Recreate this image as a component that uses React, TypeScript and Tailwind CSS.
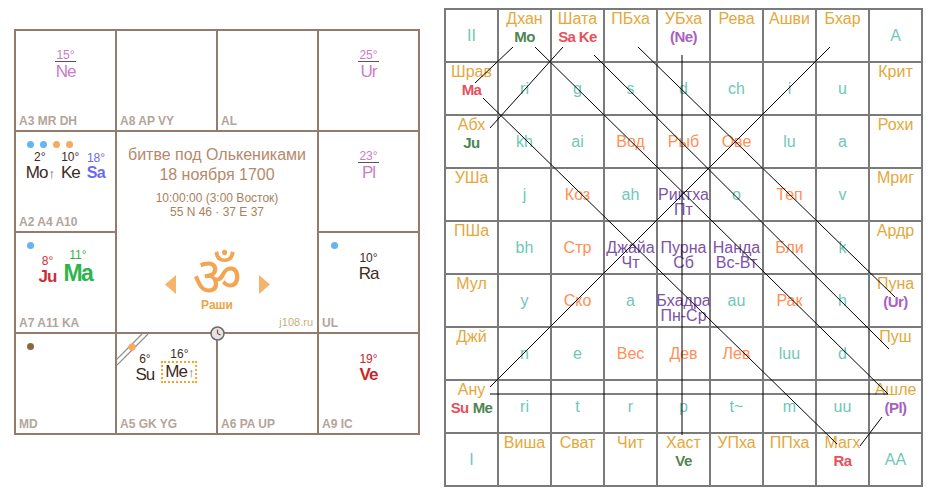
import React from "react"

const BR = "text-[#3d2b1f]"

function Dot({ c }: { c: string }) {
  return <span className={"block w-[7px] h-[7px] rounded-full " + c} />
}

function Cell({
  label,
  dots,
  children,
  extra,
}: {
  label?: string
  dots?: React.ReactNode
  children?: React.ReactNode
  extra?: React.ReactNode
}) {
  return (
    <div className="relative bg-white flex flex-col">
      {extra}
      <div className="h-[49px] flex flex-col">
        {dots ? <div className="flex gap-[6px] mt-[9px] ml-[11px]">{dots}</div> : null}
        <div className="mt-auto flex items-end justify-center gap-[7px]">{children}</div>
      </div>
      <div className="mt-auto px-[3px] pb-[2px] text-[12px] leading-[14px] font-bold text-[#b3a59b] whitespace-nowrap">
        {label}
      </div>
    </div>
  )
}

function Outer({ deg, name }: { deg: string; name: string }) {
  return (
    <div className="flex flex-col items-center text-[#c97dc8]">
      <span className="text-[12px] leading-[12px] px-[1px] border-b border-[#555]">{deg}°</span>
      <span className="text-[17px] leading-none tracking-[-1px] mt-[1px]">{name}</span>
    </div>
  )
}

function Planet({
  deg,
  name,
  degCls,
  nameCls,
}: {
  deg: string
  name: React.ReactNode
  degCls: string
  nameCls: string
}) {
  return (
    <div className="flex flex-col items-center">
      <span className={"text-[12px] leading-[13px] " + degCls}>{deg}°</span>
      <span className={"leading-none " + nameCls}>{name}</span>
    </div>
  )
}

function Clock() {
  return (
    <svg
      className="absolute left-[196px] top-[297px]"
      width="15"
      height="15"
      viewBox="-7.5 -7.5 15 15"
    >
      <circle r="6.5" fill="#e4e4e4" stroke="#6b6b6b" strokeWidth="1.5" />
      <line x1="0" y1="0" x2="0" y2="-4" stroke="#c0392b" strokeWidth="1.2" />
      <line x1="0" y1="0" x2="3" y2="1.5" stroke="#555" strokeWidth="1.2" />
    </svg>
  )
}

function LeftChart() {
  return (
    <div className="relative ml-[14px] mt-[29px] grid grid-cols-[repeat(4,99px)] grid-rows-[repeat(4,99px)] gap-[2px] p-[2px] bg-[#957b6b]">
      <Cell label="A3 MR DH">
        <Outer deg="15" name="Ne" />
      </Cell>
      <Cell label="A8 AP VY" />
      <Cell label="AL" />
      <Cell>
        <Outer deg="25" name="Ur" />
      </Cell>

      <Cell
        label="A2 A4 A10"
        dots={
          <>
            <Dot c="bg-[#66b5f2]" />
            <Dot c="bg-[#66b5f2]" />
            <Dot c="bg-[#f7a95c]" />
            <Dot c="bg-[#f7a95c]" />
          </>
        }
      >
        <Planet
          deg="2"
          degCls={BR}
          nameCls={"text-[17px] tracking-[-1px] " + BR}
          name={
            <>
              Mo<span className="text-[13px] text-[#555] ml-[1px]">↑</span>
            </>
          }
        />
        <Planet deg="10" degCls={BR} nameCls={"text-[17px] tracking-[-1px] " + BR} name="Ke" />
        <Planet
          deg="18"
          degCls="text-[#6b6bf0]"
          nameCls="text-[16px] font-bold tracking-[-0.5px] text-[#6b6bf0]"
          name="Sa"
        />
      </Cell>

      <div className="col-span-2 row-span-2 bg-white flex flex-col items-center pt-[13px] text-[#b5896a]">
        <div className="text-[16px] leading-[20px] whitespace-nowrap">битве под Ольке­никами</div>
        <div className="text-[16px] leading-[20px]">18 ноября 1700</div>
        <div className="mt-[6px] text-[12px] leading-[14px] text-[#a97f5d]">10:00:00 (3:00 Восток)</div>
        <div className="text-[12px] leading-[14px] text-[#a97f5d]">55 N 46 · 37 E 37</div>
        <div className="mt-auto w-full flex flex-col items-center">
          <div className="h-[46px] flex items-center">
            <svg className="mt-[18px]" width="11" height="19" viewBox="0 0 11 19">
              <polygon points="11,0 11,19 0,9.5" fill="#f5b36b" />
            </svg>
            <div className="w-[47px] mx-[18px] flex justify-center">
              <span className="block text-[54px] leading-[28px] text-[#f2a553] translate-y-[8px] font-['Noto_Sans_Devanagari','Lohit_Devanagari','FreeSans',sans-serif]">
                ॐ
              </span>
            </div>
            <svg className="mt-[18px]" width="11" height="19" viewBox="0 0 11 19">
              <polygon points="0,0 0,19 11,9.5" fill="#f5b36b" />
            </svg>
          </div>
          <div className="text-[12px] leading-[14px] font-bold text-[#eea447]">Раши</div>
          <div className="self-end mt-[4px] pr-[4px] pb-[3px] text-[11px] leading-[13px] text-[#c8b078]">j108.ru</div>
        </div>
      </div>

      <Cell>
        <Outer deg="23" name="Pl" />
      </Cell>

      <Cell label="A7 A11 KA" dots={<Dot c="bg-[#66b5f2]" />}>
        <Planet
          deg="8"
          degCls="text-[#cc2f3c]"
          nameCls="text-[17px] font-bold tracking-[-1px] text-[#cc2f3c]"
          name="Ju"
        />
        <Planet
          deg="11"
          degCls="text-[#2cb54c]"
          nameCls="text-[23px] font-bold tracking-[-1.5px] text-[#2cb54c]"
          name="Ma"
        />
      </Cell>
      <Cell label="UL" dots={<span className="ml-[1px]"><Dot c="bg-[#66b5f2]" /></span>}>
        <Planet deg="10" degCls={BR} nameCls={"text-[17px] tracking-[-1px] " + BR} name="Ra" />
      </Cell>

      <Cell label="MD" dots={<Dot c="bg-[#8b6640]" />} />
      <Cell
        label="A5 GK YG"
        extra={
          <svg className="absolute left-0 top-0" width="32" height="34" viewBox="0 0 32 34">
            <line x1="0" y1="25" x2="25" y2="0" stroke="#8d8d8d" strokeWidth="1.2" />
            <line x1="0" y1="31" x2="31" y2="0" stroke="#8d8d8d" strokeWidth="1.2" />
            <circle cx="15" cy="13" r="3.6" fill="#f7a95c" />
          </svg>
        }
      >
        <Planet deg="6" degCls={BR} nameCls={"text-[17px] tracking-[-1px] " + BR} name="Su" />
        <div className="flex flex-col items-center">
          <span className={"text-[12px] leading-[13px] " + BR}>16°</span>
          <span
            className={
              "text-[17px] leading-[17px] tracking-[-1px] border-2 border-dotted border-[#f5a623] px-[2px] " + BR
            }
          >
            Me<span className="text-[13px] text-[#777] ml-[1px]">↑</span>
          </span>
        </div>
      </Cell>
      <Cell label="A6 PA UP" />
      <Cell label="A9 IC">
        <Planet
          deg="19"
          degCls="text-[#c8252c]"
          nameCls="text-[17px] font-bold tracking-[-1px] text-[#c8252c]"
          name="Ve"
        />
      </Cell>

      <Clock />
    </div>
  )
}

const RED = "text-[#e8505b]"
const GRN = "text-[#4f8552]"
const PUR = "text-[#a861c0]"

type P = [string, string]
type C =
  | { t: "n"; name: string; pl?: P[] }
  | { t: "s"; v: string }
  | { t: "z"; v: string }
  | { t: "d"; a: string; b: string }
  | { t: "c"; v: string }

const n = (name: string, pl?: P[]): C => ({ t: "n", name, pl })
const s = (v: string): C => ({ t: "s", v })
const z = (v: string): C => ({ t: "z", v })
const d = (a: string, b: string): C => ({ t: "d", a, b })
const c = (v: string): C => ({ t: "c", v })

const rows: C[][] = [
  [c("II"), n("Дхан", [["Mo", GRN]]), n("Шата", [["Sa Ke", RED]]), n("ПБха"), n("УБха", [["(Ne)", PUR]]), n("Рева"), n("Ашви"), n("Бхар"), c("A")],
  [n("Шрав", [["Ma", RED]]), s("ri"), s("g"), s("s"), s("d"), s("ch"), s("i"), s("u"), n("Крит")],
  [n("Абх", [["Ju", GRN]]), s("kh"), s("ai"), z("Вод"), z("Рыб"), z("Ове"), s("lu"), s("a"), n("Рохи")],
  [n("УШа"), s("j"), z("Коз"), s("ah"), d("Риктха", "Пт"), s("o"), z("Теп"), s("v"), n("Мриг")],
  [n("ПШа"), s("bh"), z("Стр"), d("Джайа", "Чт"), d("Пурна", "Сб"), d("Нанда", "Вс-Вт"), z("Бли"), s("k"), n("Ардр")],
  [n("Мул"), s("y"), z("Ско"), s("a"), d("Бхадра", "Пн-Ср"), s("au"), z("Рак"), s("h"), n("Пуна", [["(Ur)", PUR]])],
  [n("Джй"), s("n"), s("e"), z("Вес"), z("Дев"), z("Лев"), s("luu"), s("d"), n("Пуш")],
  [n("Ану", [["Su", RED], ["Me", GRN]]), s("ri"), s("t"), s("r"), s("p"), s("t~"), s("m"), s("uu"), n("Ашле", [["(Pl)", PUR]])],
  [c("I"), n("Виша"), n("Сват"), n("Чит"), n("Хаст", [["Ve", GRN]]), n("УПха"), n("ППха"), n("Магх", [["Ra", RED]]), c("AA")],
]

function GridCell({ cell }: { cell: C }) {
  if (cell.t === "n") {
    return (
      <div className="bg-white flex flex-col items-center pt-[1px] whitespace-nowrap">
        <span className="leading-[16px] text-[#e3a83c]">{cell.name}</span>
        {cell.pl ? (
          <span className="mt-[2px] flex gap-[4px] text-[15px] font-bold leading-[15px] tracking-[-0.6px]">
            {cell.pl.map(([p, col]) => (
              <span key={p} className={col}>
                {p}
              </span>
            ))}
          </span>
        ) : null}
      </div>
    )
  }
  if (cell.t === "d") {
    return (
      <div className="bg-white flex flex-col items-center justify-center pt-[14px] leading-[15px] text-[#7e52a8] whitespace-nowrap">
        <span>{cell.a}</span>
        <span>{cell.b}</span>
      </div>
    )
  }
  const col = cell.t === "z" ? "text-[#ff8f55]" : "text-[#6fc8b6]"
  return <div className={"bg-white flex items-center justify-center " + col}>{cell.v}</div>
}

const lines: [number, number, number, number][] = [
  [91, 39, 444, 386],
  [150, 47, 445, 341],
  [194, 39, 451, 289],
  [39, 90, 393, 436],
  [69, 39, 31, 75],
  [119, 39, 46, 120],
  [386, 39, 46, 379],
  [416, 438, 438, 409],
  [238, 47, 238, 427],
  [46, 386, 444, 386],
]

function RightGrid() {
  return (
    <div className="relative ml-[24px] mt-[8px]">
      <div className="grid grid-cols-[repeat(9,51px)] grid-rows-[repeat(9,51px)] gap-[2px] p-[2px] bg-[#7a7a7a] text-[16px]">
        {rows.flat().map((cell, i) => (
          <GridCell key={i} cell={cell} />
        ))}
      </div>
      <svg className="absolute left-0 top-0 pointer-events-none" width="479" height="479">
        {lines.map(([x1, y1, x2, y2], i) => (
          <line key={i} x1={x1} y1={y1} x2={x2} y2={y2} stroke="#000" strokeWidth="1" />
        ))}
      </svg>
    </div>
  )
}

export default function App() {
  return (
    <div className="w-[930px] h-[491px] bg-white flex items-start font-['Liberation_Sans',Arial,sans-serif]">
      <LeftChart />
      <RightGrid />
    </div>
  )
}
